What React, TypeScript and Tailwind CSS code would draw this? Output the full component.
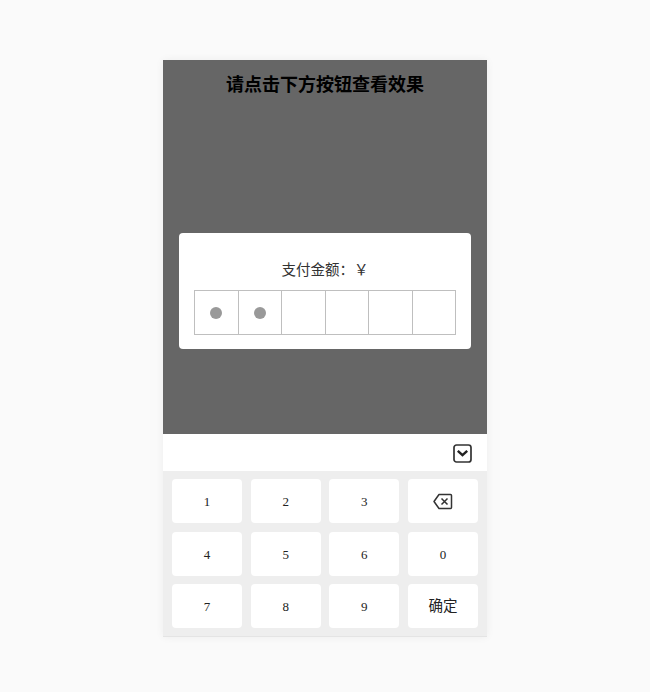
const keys = ['1', '2', '3', 'back', '4', '5', '6', '0', '7', '8', '9', '确定'];
const cells = [true, true, false, false, false, false];

function BackIcon() {
  return (
    <svg width="20" height="17" viewBox="0 0 20 17" fill="none" stroke="#333" strokeWidth="1.5">
      <path d="M6 1.5h11.5a1 1 0 0 1 1 1v12a1 1 0 0 1-1 1H6L1 8.5z" strokeLinejoin="round" />
      <path d="M8.5 5.5l6 6M14.5 5.5l-6 6" />
    </svg>
  );
}

function ChevronBox() {
  return (
    <svg width="19" height="19" viewBox="0 0 19 19" fill="none">
      <rect x="1" y="1" width="17" height="17" rx="2.5" stroke="#333" strokeWidth="1.7" />
      <path d="M4.8 6.8l4.7 4.4 4.7-4.4" stroke="#222" strokeWidth="2.4" />
    </svg>
  );
}

export default function App() {
  return (
    <div className="min-h-[692px] bg-[#fafafa] pt-[60px] font-['Liberation_Sans','Noto_Sans_CJK_SC',sans-serif]">
      <div className="mx-auto flex h-[577px] w-[324px] flex-col border-b border-[#e4e4e4] shadow-[0_0_8px_rgba(0,0,0,0.06)]">
        {/* overlay */}
        <div className="h-[374px] bg-[#666666] px-4">
          <h1 className="pt-[13px] text-center text-[18px] leading-[24px] font-bold text-black">
            请点击下方按钮查看效果
          </h1>
          <div className="mt-[136px] h-[116px] rounded bg-white px-[15px] pt-[27px]">
            <div className="text-center text-[14.5px] leading-[20px] text-[#333]">支付金额：￥</div>
            <div className="mt-[10px] flex h-[45px] border border-[#bfbfbf]">
              {cells.map((on, i) => (
                <div key={i} className="flex flex-1 items-center justify-center border-l border-[#bfbfbf] first:border-l-0">
                  {on && <span className="h-3 w-3 rounded-full bg-[#999999]" />}
                </div>
              ))}
            </div>
          </div>
        </div>
        {/* toolbar */}
        <div className="flex h-[37px] items-center justify-end bg-white pt-[2px] pr-[15px]">
          <ChevronBox />
        </div>
        {/* keyboard */}
        <div className="grid flex-1 grid-cols-4 grid-rows-3 gap-[8.5px] bg-[#eeeeee] px-[9px] py-[8px]">
          {keys.map((k) => (
            <div key={k} className="flex min-h-0 items-center justify-center rounded bg-white pt-[1px] font-['Liberation_Serif','Noto_Sans_CJK_SC',serif] text-[13px] leading-none text-[#222]">
              {k === 'back' ? (
                <BackIcon />
              ) : k === '确定' ? (
                <span className="font-['Liberation_Sans','Noto_Sans_CJK_SC',sans-serif] text-[14.5px]">{k}</span>
              ) : (
                k
              )}
            </div>
          ))}
        </div>
      </div>
    </div>
  );
}
